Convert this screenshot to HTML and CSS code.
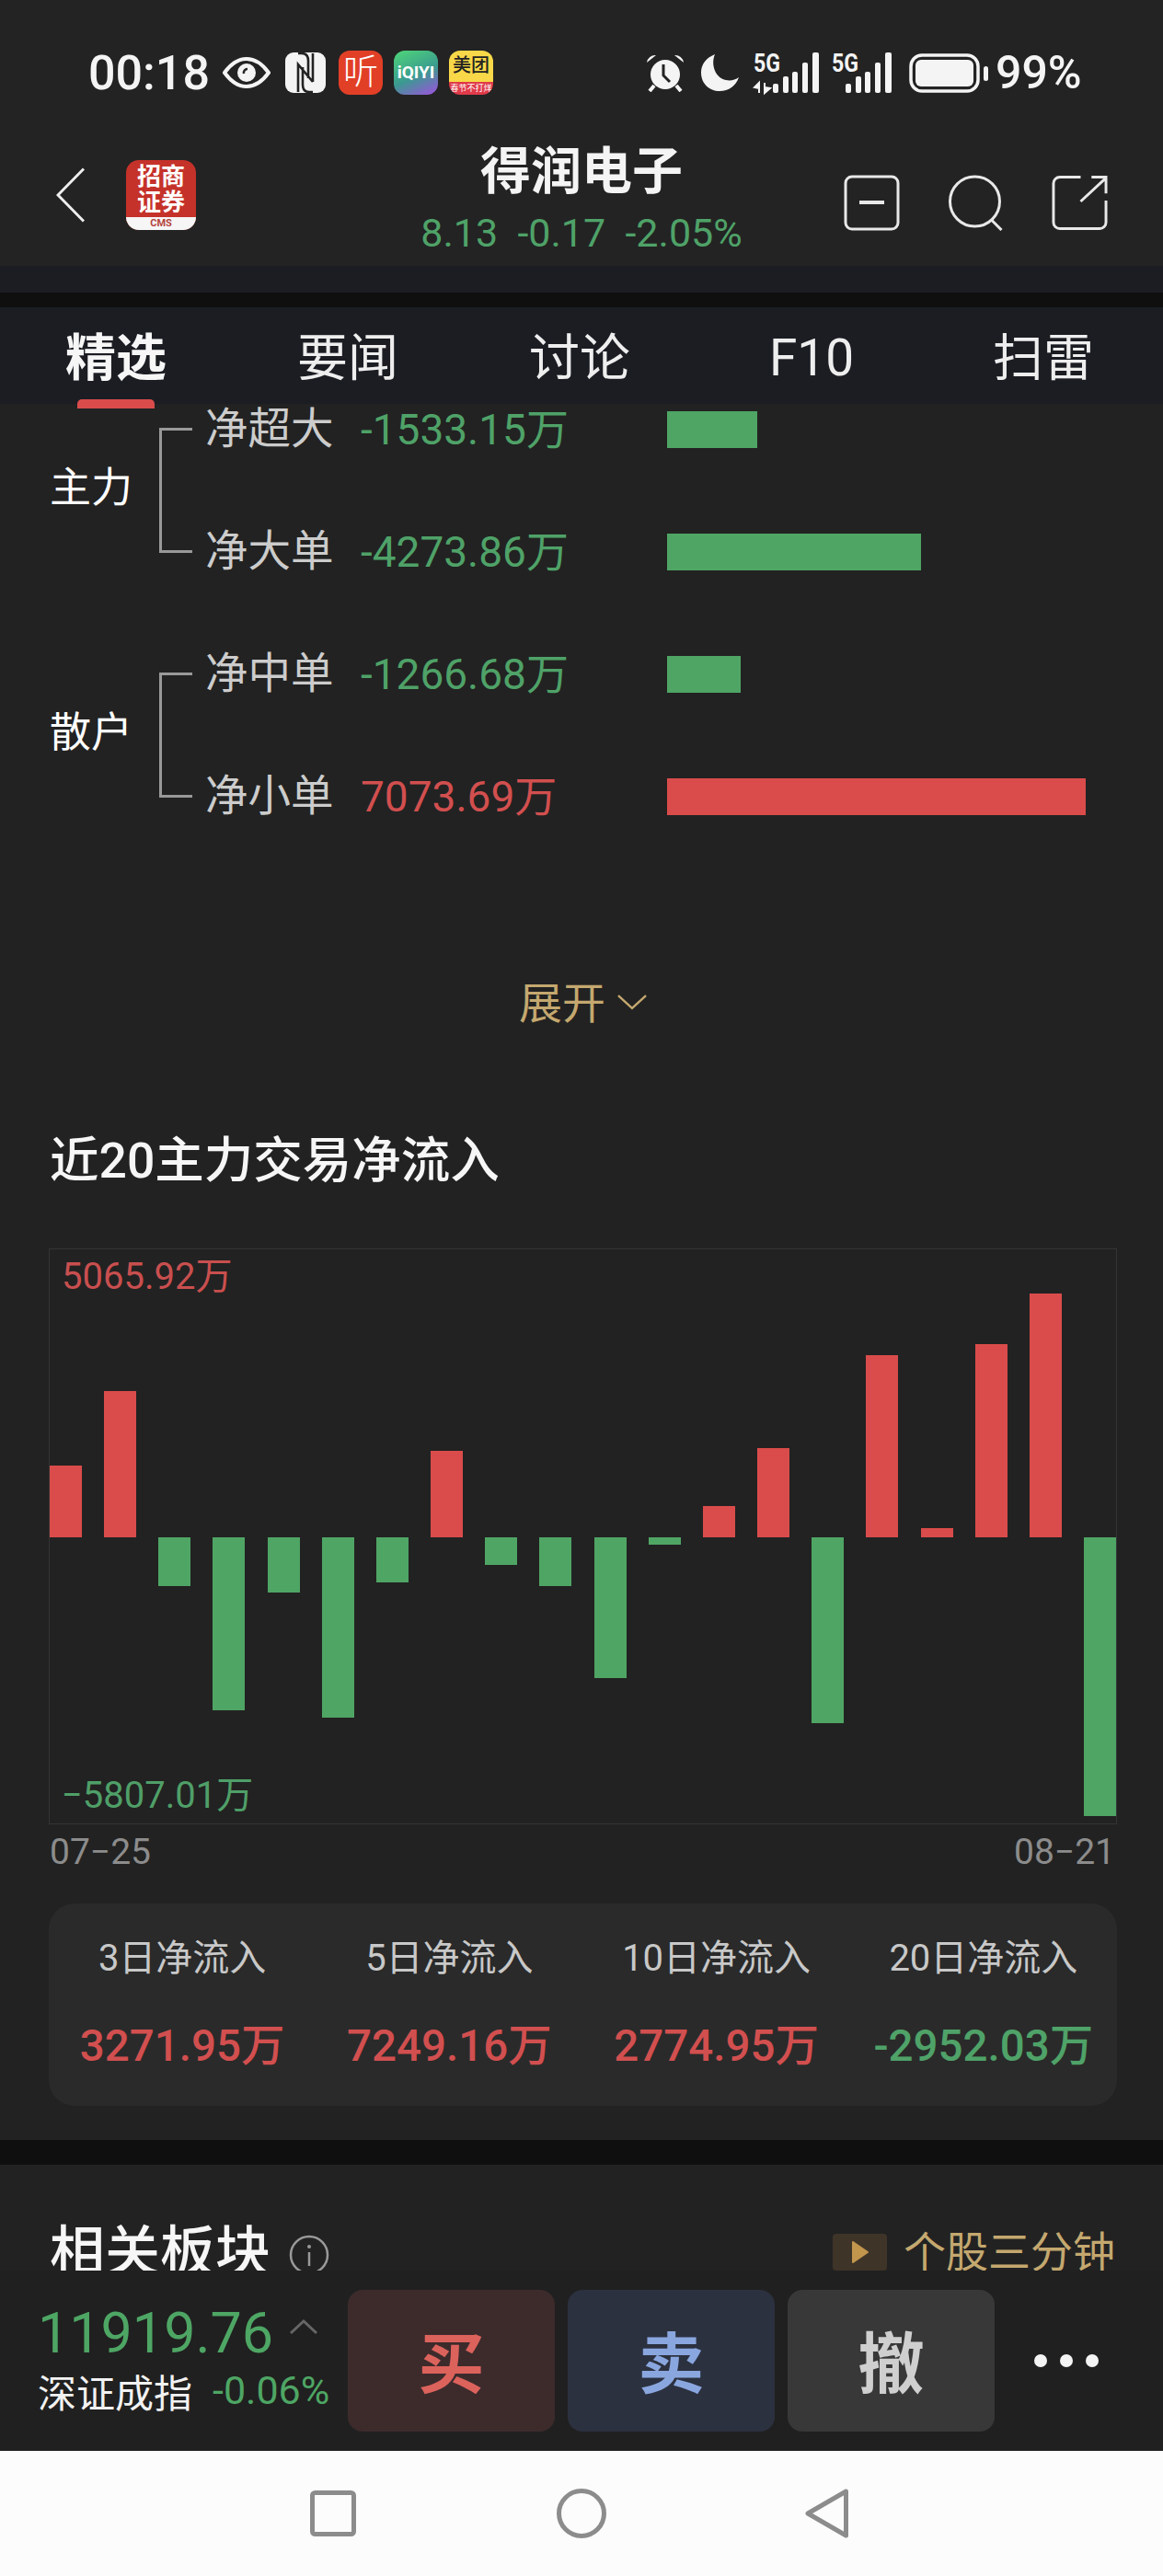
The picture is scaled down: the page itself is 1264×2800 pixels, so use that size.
FILE: index.html
```html
<!DOCTYPE html>
<html lang="zh-CN">
<head>
    <meta charset="UTF-8">
    <meta name="viewport" content="width=device-width, initial-scale=1.0">
    <title>得润电子</title>
    <link rel="stylesheet" href="styles.css">
</head>
<body>
    <div class="phone">
        <!-- Статус-бар -->
        <div class="statusbar">
            <span class="time">00:18</span>
            <svg class="st-eye" viewBox="0 0 52 34"><path d="M2 17C10 6 18 2 26 2s16 4 24 15c-8 11-16 15-24 15S10 28 2 17z" fill="none" stroke="#f4f4f4" stroke-width="4"/><circle cx="26" cy="17" r="10" fill="#f4f4f4"/><path d="M23 18a4 4 0 0 1 4-5" fill="none" stroke="#232323" stroke-width="2.5"/></svg>
            <svg class="st-nfc" viewBox="0 0 44 44"><rect width="44" height="44" rx="9" fill="#f4f4f4"/><path d="M14 1h4c5 0 7 3 7 8v19M14 43V13l16 19M30 43h-4c-5 0-7-3-7-8V16M30 1v31" fill="none" stroke="#232323" stroke-width="2.6"/></svg>
            <div class="app-icon app-ting">听</div>
            <div class="app-icon app-iqiyi">iQIYI</div>
            <div class="app-icon app-meituan"><span class="mt-top">美团</span><span class="mt-bot">春节不打烊</span></div>
            <div class="status-right">
                <svg class="st-alarm" viewBox="0 0 44 42"><path d="M2 10a9 9 0 0 1 10-8zM42 10a9 9 0 0 0-10-8z" fill="#f4f4f4"/><circle cx="22" cy="23" r="16" fill="#f4f4f4"/><path d="M20 12v12l7 7" fill="none" stroke="#232323" stroke-width="3"/><path d="M10 35l-5 6M34 35l5 6" stroke="#f4f4f4" stroke-width="4"/></svg>
                <svg class="st-moon" viewBox="0 0 41 40"><path d="M15 0C5 4 0 11 0 20c0 12 9 20 20 20 10 0 18-6 21-15-4 3-9 4-14 3C16 26 10 12 15 0z" fill="#f4f4f4"/></svg>
                <svg class="st-sig1" viewBox="0 0 71 44">
                    <text class="fiveg" x="0" y="21" font-size="28" textLength="29" lengthAdjust="spacingAndGlyphs">5G</text>
                    <path d="M6 33v11M1 38l5-5v6zM12 33v11M18 39l-6 5v-6z" stroke="#f4f4f4" stroke-width="2" fill="#f4f4f4"/>
                    <rect x="21" y="34" width="6" height="10" rx="2" fill="#f4f4f4"/><rect x="32" y="26" width="6" height="18" rx="2" fill="#f4f4f4"/><rect x="42" y="21" width="6" height="23" rx="2" fill="#f4f4f4"/><rect x="53" y="11" width="6" height="33" rx="2" fill="#f4f4f4"/><rect x="64" y="0" width="7" height="44" rx="2" fill="#f4f4f4"/>
                </svg>
                <svg class="st-sig2" viewBox="0 0 65 44">
                    <text class="fiveg" x="0" y="21" font-size="28" textLength="29" lengthAdjust="spacingAndGlyphs">5G</text>
                    <rect x="15" y="34" width="6" height="10" rx="2" fill="#f4f4f4"/><rect x="26" y="26" width="6" height="18" rx="2" fill="#f4f4f4"/><rect x="36" y="21" width="6" height="23" rx="2" fill="#f4f4f4"/><rect x="47" y="11" width="6" height="33" rx="2" fill="#f4f4f4"/><rect x="58" y="0" width="7" height="44" rx="2" fill="#f4f4f4"/>
                </svg>
                <svg class="st-batt" viewBox="0 0 86 43"><rect x="2" y="2" width="73" height="39" rx="12" fill="none" stroke="#f4f4f4" stroke-width="3.5"/><rect x="7" y="7" width="63" height="29" rx="6" fill="#f4f4f4"/><rect x="81" y="14" width="5" height="16" rx="2.5" fill="#f4f4f4"/></svg>
                <span class="batt-text">99%</span>
            </div>
        </div>

        <!-- Шапка -->
        <div class="header">
            <div class="header-left">
                <svg class="back" viewBox="0 0 31 60"><path d="M30 1.500L2 30l28 28.500" fill="none" stroke="#eee" stroke-width="3"/></svg>
                <div class="logo">
                    <div class="logo-name">招商<br>证券</div>
                    <div class="logo-cms">CMS</div>
                </div>
            </div>
            <div class="header-center">
                <div class="stock-name">得润电子</div>
                <div class="stock-price">8.13&nbsp;&nbsp;-0.17&nbsp;&nbsp;-2.05%</div>
            </div>
            <div class="header-right">
                <svg class="h-icon" viewBox="0 0 61 61"><rect x="2" y="2" width="57" height="57" rx="7" fill="none" stroke="#e8e8e8" stroke-width="3"/><path d="M17 30h27" stroke="#e8e8e8" stroke-width="4"/></svg>
                <svg class="h-icon" viewBox="0 0 60 61"><circle cx="29" cy="29" r="27" fill="none" stroke="#e8e8e8" stroke-width="3"/><path d="M47 49l11 11" stroke="#e8e8e8" stroke-width="3"/></svg>
                <svg class="h-icon" viewBox="0 0 62 61"><path d="M32 2H9a7 7 0 0 0-7 7v43a7 7 0 0 0 7 7h44a7 7 0 0 0 7-7V28M32 29L60 3M44 2h16v18" fill="none" stroke="#e8e8e8" stroke-width="3"/></svg>
            </div>
        </div>
        <div class="sliver"></div>
        <div class="gap-bar gap-thin"></div>

        <!-- Вкладки -->
        <div class="tabs">
            <div class="tab active">精选</div>
            <div class="tab">要闻</div>
            <div class="tab">讨论</div>
            <div class="tab">F10</div>
            <div class="tab">扫雷</div>
        </div>

        <div class="content">
            <div class="fund-group">
                <div class="group-label">主力</div>
                <div class="bracket"></div>
                <div class="fund-rows">
                    <div class="fund-row"><span class="fund-name">净超大</span><span class="fund-value down">-1533.15万</span><div class="fund-bar bg-down" style="width:98px"></div></div>
                    <div class="fund-row"><span class="fund-name">净大单</span><span class="fund-value down">-4273.86万</span><div class="fund-bar bg-down" style="width:276px"></div></div>
                </div>
            </div>
            <div class="fund-group">
                <div class="group-label">散户</div>
                <div class="bracket"></div>
                <div class="fund-rows">
                    <div class="fund-row"><span class="fund-name">净中单</span><span class="fund-value down">-1266.68万</span><div class="fund-bar bg-down" style="width:80px"></div></div>
                    <div class="fund-row"><span class="fund-name">净小单</span><span class="fund-value up">7073.69万</span><div class="fund-bar bg-up" style="width:455px"></div></div>
                </div>
            </div>

            <div class="expand">展开<svg class="expand-arrow" viewBox="0 0 33 18"><path d="M1 2l15.500 14L32 2" fill="none" stroke="#c4a86f" stroke-width="2.500"/></svg></div>

            <div class="chart-title">近20主力交易净流入</div>
            <div class="chart">
                <svg class="chart-svg" viewBox="0 0 1159 624">
                    <g class="bar-up">
                        <rect x="0" y="235" width="35" height="78"/>
                        <rect x="59" y="154" width="35" height="159"/>
                        <rect x="414" y="219" width="35" height="94"/>
                        <rect x="710" y="279" width="35" height="34"/>
                        <rect x="769" y="216" width="35" height="97"/>
                        <rect x="887" y="115" width="35" height="198"/>
                        <rect x="947" y="303" width="35" height="10"/>
                        <rect x="1006" y="103" width="35" height="210"/>
                        <rect x="1065" y="48" width="35" height="265"/>
                    </g>
                    <g class="bar-down">
                        <rect x="118" y="313" width="35" height="53"/>
                        <rect x="177" y="313" width="35" height="188"/>
                        <rect x="237" y="313" width="35" height="60"/>
                        <rect x="296" y="313" width="35" height="196"/>
                        <rect x="355" y="313" width="35" height="49"/>
                        <rect x="473" y="313" width="35" height="30"/>
                        <rect x="532" y="313" width="35" height="53"/>
                        <rect x="592" y="313" width="35" height="153"/>
                        <rect x="651" y="313" width="35" height="8"/>
                        <rect x="828" y="313" width="35" height="202"/>
                        <rect x="1124" y="313" width="35" height="303"/>
                    </g>
                </svg>
                <span class="chart-max">5065.92万</span>
                <span class="chart-min">−5807.01万</span>
            </div>
            <div class="chart-axis"><span>07−25</span><span>08−21</span></div>

            <div class="flow-card">
                <div class="flow-cell"><div class="flow-label">3日净流入</div><div class="flow-value up">3271.95万</div></div>
                <div class="flow-cell"><div class="flow-label">5日净流入</div><div class="flow-value up">7249.16万</div></div>
                <div class="flow-cell"><div class="flow-label">10日净流入</div><div class="flow-value up">2774.95万</div></div>
                <div class="flow-cell"><div class="flow-label">20日净流入</div><div class="flow-value down">-2952.03万</div></div>
            </div>
        </div>
        <div class="gap-bar gap-wide"></div>

        <!-- Связанные сектора, снизу обрезаны панелью -->
        <div class="sector">
            <div class="sector-title">相关板块</div>
            <svg class="info" viewBox="0 0 44 44"><circle cx="22" cy="22" r="20" fill="none" stroke="#999" stroke-width="2.500"/><circle cx="22" cy="13" r="2" fill="#999"/><path d="M22 19v15" stroke="#999" stroke-width="2.500"/></svg>
            <div class="video-link">
                <div class="video-icon"><svg class="video-play" viewBox="0 0 20 26"><path d="M2 2l16 11L2 24z" fill="#c2964d" stroke="#c2964d" stroke-width="2" stroke-linejoin="round"/></svg></div>
                个股三分钟
            </div>
        </div>

        <!-- Нижняя панель -->
        <div class="toolbar">
            <div class="index">
                <div class="index-top">
                    <span class="index-value">11919.76</span>
                    <svg class="index-caret" viewBox="0 0 32 18"><path d="M2 16L16 3l14 13" fill="none" stroke="#666" stroke-width="3"/></svg>
                </div>
                <div class="index-bottom">
                    <span class="index-name">深证成指</span>
                    <span class="index-change">-0.06%</span>
                </div>
            </div>
            <button class="trade buy">买</button>
            <button class="trade sell">卖</button>
            <button class="trade cancel">撤</button>
            <div class="dots"><i></i><i></i><i></i></div>
        </div>

        <!-- Навигация -->
        <div class="navbar">
            <svg class="nav-square" viewBox="0 0 50 50"><rect x="2.500" y="2.500" width="45" height="45" rx="3" fill="none" stroke="#8c8c8c" stroke-width="5"/></svg>
            <svg class="nav-circle" viewBox="0 0 54 54"><circle cx="27" cy="27" r="24.500" fill="none" stroke="#8c8c8c" stroke-width="5"/></svg>
            <svg class="nav-back" viewBox="0 0 47 54"><path d="M44.500 3v48L3 27z" fill="none" stroke="#8c8c8c" stroke-width="5" stroke-linejoin="round"/></svg>
        </div>
    </div>
</body>
</html>
```

FILE: styles.css
```css
* {
    box-sizing: border-box;
}
body {
    margin: 0;
    background-color: #fcfcfc;
    font-family: Roboto, "Noto Sans CJK SC", sans-serif;
    color: #f4f4f4;
}
.phone {
    width: 1264px;
    height: 2800px;
    overflow: hidden;
}
.up {
    color: #d24f4f;
}
.down {
    color: #4fa268;
}
.bg-up {
    background-color: #d94c4b;
}
.bg-down {
    background-color: #4fa564;
}

/* status bar */
.statusbar {
    display: flex;
    align-items: center;
    height: 138px;
    padding: 20px 90px 0 96px;
    background-color: #232323;
}
.time {
    width: 130px;
    font-size: 52px;
    font-weight: 500;
}
.st-eye {
    width: 52px;
    height: 34px;
    margin-left: 16px;
}
.st-nfc {
    width: 44px;
    height: 44px;
    margin-left: 16px;
}
.app-icon {
    width: 48px;
    height: 48px;
    border-radius: 12px;
    overflow: hidden;
    color: #fff;
    text-align: center;
}
.app-ting {
    margin-left: 14px;
    background-color: #e23f27;
    font-size: 38px;
    line-height: 46px;
    font-weight: 300;
}
.app-iqiyi {
    margin-left: 12px;
    background: linear-gradient(155deg, #4fd678, #3a9a90 55%, #a050e0);
    font-size: 19px;
    font-weight: 700;
    line-height: 48px;
}
.app-meituan {
    margin-left: 12px;
    display: flex;
    flex-direction: column;
}
.mt-top {
    height: 34px;
    background-color: #f8d849;
    color: #222;
    font-size: 20px;
    line-height: 33px;
    font-weight: 500;
}
.mt-bot {
    height: 14px;
    background-color: #e03a4a;
    font-size: 9px;
    line-height: 14px;
    white-space: nowrap;
}
.status-right {
    display: flex;
    align-items: center;
    margin-left: auto;
}
.st-alarm {
    width: 44px;
    height: 42px;
}
.st-moon {
    width: 41px;
    height: 40px;
    margin-left: 17px;
}
.st-sig1 {
    width: 71px;
    height: 44px;
    margin-left: 16px;
    overflow: visible;
}
.st-sig2 {
    width: 65px;
    height: 44px;
    margin-left: 14px;
    overflow: visible;
}
.st-batt {
    width: 86px;
    height: 43px;
    margin-left: 19px;
}
.batt-text {
    width: 92px;
    margin-left: 8px;
    font-size: 50px;
    font-weight: 500;
    white-space: nowrap;
}
.fiveg {
    font-family: Roboto, sans-serif;
    font-weight: 700;
    fill: #f4f4f4;
}

/* header */
.header {
    display: grid;
    grid-template-columns: 1fr auto 1fr;
    height: 151px;
    padding-top: 18px;
    background-color: #232323;
}
.header-left {
    display: flex;
    align-items: center;
    padding-left: 61px;
    margin-bottom: 22px;
}
.back {
    width: 31px;
    height: 60px;
}
.logo {
    width: 76px;
    height: 76px;
    margin-left: 45px;
    border-radius: 14px;
    overflow: hidden;
    background-color: #c5322a;
    text-align: center;
}
.logo-name {
    height: 62px;
    padding-top: 4px;
    font-size: 26px;
    line-height: 28px;
    font-weight: 700;
    color: #fff;
}
.logo-cms {
    height: 14px;
    background-color: #f6f6f6;
    color: #b5443c;
    font-size: 11px;
    line-height: 14px;
    font-weight: 700;
}
.header-center {
    text-align: center;
}
.stock-name {
    font-size: 55px;
    line-height: 60px;
    font-weight: 700;
}
.stock-price {
    margin-top: 7px;
    font-size: 43px;
    line-height: 60px;
    color: #4fa268;
    white-space: nowrap;
}
.header-right {
    display: flex;
    justify-content: flex-end;
    align-items: center;
    gap: 52px;
    padding-right: 60px;
    margin-bottom: 4px;
}
.h-icon {
    width: 61px;
    height: 61px;
}

.sliver {
    height: 29px;
    background-color: #1b1d23;
}
.gap-bar {
    background-color: #0f0f0f;
}
.gap-thin {
    height: 16px;
}
.gap-wide {
    height: 27px;
}

/* tabs */
.tabs {
    display: grid;
    grid-template-columns: repeat(5, 252px);
    height: 105px;
    background-color: #1b1d23;
}
.tab {
    position: relative;
    text-align: center;
    font-size: 55px;
    line-height: 110px;
    color: #eee;
}
.tab.active {
    font-weight: 700;
    color: #f6f6f6;
}
.tab.active::after {
    content: "";
    position: absolute;
    left: 84px;
    bottom: 0;
    width: 84px;
    height: 10px;
    border-radius: 5px 5px 0 0;
    background-color: #d94c4b;
}

/* fund list */
.content {
    height: 1887px;
    overflow: hidden;
    background-color: #222;
}
.fund-group {
    display: flex;
    align-items: center;
    padding-left: 54px;
}
.fund-group:first-child {
    margin-top: -39px;
}
.group-label {
    width: 90px;
    padding-bottom: 14px;
    font-size: 45px;
    color: #fff;
    white-space: nowrap;
}
.bracket {
    width: 36px;
    height: 136px;
    margin-left: 29px;
    border: 3px solid #999;
    border-right: none;
}
.fund-rows {
    margin-left: 14px;
}
.fund-row {
    display: flex;
    align-items: center;
    height: 133px;
}
.fund-name {
    width: 169px;
    padding-bottom: 11px;
    font-size: 46.5px;
    color: #ccc;
    white-space: nowrap;
}
.fund-value {
    width: 333px;
    padding-bottom: 7px;
    font-size: 46px;
    white-space: nowrap;
}
.fund-bar {
    height: 40px;
}
.expand {
    display: flex;
    justify-content: center;
    align-items: center;
    height: 60px;
    margin-top: 124px;
    padding-left: 3px;
    font-size: 47px;
    color: #c4a86f;
}
.expand-arrow {
    width: 32px;
    height: 18px;
    margin-left: 13px;
    margin-top: 6px;
}

/* chart */
.chart-title {
    height: 60px;
    margin-top: 116px;
    padding-left: 54px;
    font-size: 53.5px;
    line-height: 60px;
    font-weight: 500;
    color: #f6f6f6;
}
.chart {
    position: relative;
    width: 1161px;
    height: 626px;
    margin: 65px 0 0 53px;
    border: 1px solid #343434;
}
.chart-svg {
    display: block;
    width: 1159px;
    height: 624px;
}
.bar-up {
    fill: #d94c4b;
}
.bar-down {
    fill: #4fa564;
}
.chart-max,
.chart-min {
    position: absolute;
    left: 13px;
    font-size: 40px;
    line-height: 44px;
}
.chart-max {
    top: 8px;
    color: #c94f4f;
}
.chart-min {
    bottom: 8px;
    color: #4f9f68;
}
.chart-axis {
    display: flex;
    justify-content: space-between;
    width: 1158px;
    height: 44px;
    margin: 8px 0 0 54px;
    font-size: 39px;
    line-height: 44px;
    color: #8c8c8c;
}
.flow-card {
    display: grid;
    grid-template-columns: repeat(4, 1fr);
    width: 1161px;
    height: 220px;
    margin: 34px 0 0 53px;
    padding-top: 35px;
    border-radius: 28px;
    background-color: #2a2a2a;
    text-align: center;
}
.flow-label {
    font-size: 40px;
    line-height: 50px;
    color: #c8c8c8;
}
.flow-value {
    margin-top: 44px;
    font-size: 47.5px;
    line-height: 52px;
    font-weight: 500;
    white-space: nowrap;
}

/* sector */
.sector {
    display: flex;
    align-items: flex-start;
    height: 115px;
    padding: 63px 52px 0 54px;
    overflow: hidden;
    background-color: #222;
}
.sector-title {
    font-size: 60px;
    line-height: 66px;
    font-weight: 500;
    color: #f6f6f6;
}
.info {
    width: 44px;
    height: 44px;
    margin: 13px 0 0 20px;
}
.video-link {
    display: flex;
    align-items: center;
    height: 58px;
    margin-top: -1px;
    margin-left: auto;
    font-size: 46px;
    color: #c4a86f;
    gap: 18px;
}
.video-icon {
    display: flex;
    justify-content: center;
    align-items: center;
    width: 59px;
    height: 40px;
    margin-top: 8px;
    border-radius: 4px;
    background-color: #3e3428;
}
.video-play {
    width: 20px;
    height: 26px;
}

/* toolbar */
.toolbar {
    display: flex;
    align-items: center;
    height: 196px;
    padding-left: 41px;
    background-color: #202020;
}
.index {
    width: 337px;
}
.index-top {
    display: flex;
    align-items: center;
    height: 64px;
}
.index-value {
    width: 273px;
    font-size: 61px;
    color: #4ea664;
}
.index-caret {
    width: 32px;
    height: 18px;
    margin-top: -14px;
}
.index-bottom {
    display: flex;
    align-items: center;
    height: 60px;
}
.index-name {
    width: 190px;
    font-size: 42px;
    color: #f2f2f2;
}
.index-change {
    font-size: 43px;
    color: #4ea664;
    white-space: nowrap;
}
.trade {
    width: 225px;
    height: 154px;
    margin-right: 14px;
    padding: 0 0 6px;
    border: none;
    border-radius: 16px;
    font-family: inherit;
    font-size: 72px;
    font-weight: 700;
}
.buy {
    background-color: #3d2b2c;
    color: #dc625c;
}
.sell {
    background-color: #2c3140;
    color: #8aa6de;
}
.cancel {
    background-color: #383838;
    color: #cfcfcf;
}
.dots {
    display: flex;
    gap: 14px;
    margin-left: 29px;
}
.dots i {
    width: 14px;
    height: 14px;
    border-radius: 50%;
    background-color: #f4f4f4;
}

/* nav */
.navbar {
    display: flex;
    align-items: center;
    height: 136px;
    padding: 0 0 0 337px;
    background-color: #fcfcfc;
}
.nav-square {
    width: 50px;
    height: 50px;
}
.nav-circle {
    width: 54px;
    height: 54px;
    margin-left: 218px;
}
.nav-back {
    width: 47px;
    height: 54px;
    margin-left: 216px;
}
```
